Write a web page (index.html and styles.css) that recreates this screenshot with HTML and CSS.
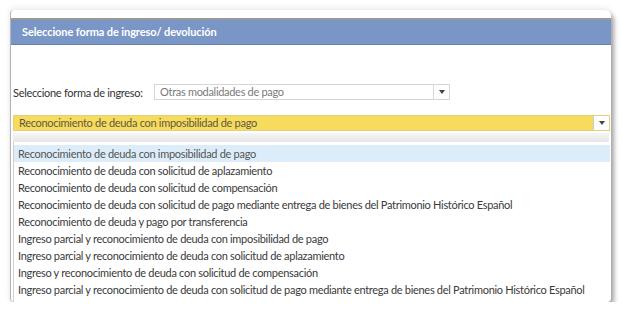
FILE: index.html
```html
<!DOCTYPE html>
<html lang="es">
<head>
    <meta charset="UTF-8">
    <title>Forma de ingreso</title>
    <link rel="stylesheet" href="styles.css">
</head>
<body>
    <div class="window">
        <div class="topband"></div>
        <div class="panel_head">Seleccione forma de ingreso/ devolución</div>
        <div class="panel_body">
            <div class="form_row">
                <span class="form_label">Seleccione forma de ingreso:</span>
                <div class="combo">
                    <span class="combo_text">Otras modalidades de pago</span>
                    <span class="combo_btn"><span class="arrow"></span></span>
                </div>
            </div>
            <div class="combo combo_open">
                <span class="combo_text">Reconocimiento de deuda con imposibilidad de pago</span>
                <span class="combo_btn"><span class="arrow"></span></span>
            </div>
            <div class="list_shade"></div>
            <ul class="list">
                <li class="selected">Reconocimiento de deuda con imposibilidad de pago</li>
                <li>Reconocimiento de deuda con solicitud de aplazamiento</li>
                <li>Reconocimiento de deuda con solicitud de compensación</li>
                <li>Reconocimiento de deuda con solicitud de pago mediante entrega de bienes del Patrimonio Histórico Español</li>
                <li>Reconocimiento de deuda y pago por transferencia</li>
                <li>Ingreso parcial y reconocimiento de deuda con imposibilidad de pago</li>
                <li>Ingreso parcial y reconocimiento de deuda con solicitud de aplazamiento</li>
                <li>Ingreso y reconocimiento de deuda con solicitud de compensación</li>
                <li>Ingreso parcial y reconocimiento de deuda con solicitud de pago mediante entrega de bienes del Patrimonio Histórico Español</li>
            </ul>
        </div>
    </div>
</body>
</html>
```

FILE: styles.css
```css
body {
    margin: 0;
    background: #fff;
    font-family: Lato, "Open Sans", sans-serif;
    font-size: 11px;
    letter-spacing: -0.3px;
}

.window {
    margin: 10px 0 0 10px;
    width: 601px;
    height: 292px;
    background: #fff;
    border-left: 1px solid #b5b5b5;
    border-radius: 4px 6px 4px 4px;
    box-shadow: 3px 4px 5px rgba(0, 0, 0, 0.35), 0 -2px 6px rgba(0, 0, 0, 0.08);
    overflow: hidden;
    box-sizing: border-box;
}

.topband {
    height: 8px;
    border-bottom: 2px solid #9a9a9a;
}

.panel_head {
    height: 24px;
    line-height: 24px;
    padding-left: 11px;
    background: #7a96c7;
    border-bottom: 1px solid #6a7fa8;
    color: #fff;
    font-weight: bold;
    letter-spacing: -0.1px;
}

.panel_body {
    padding: 39px 0 0 2px;
}

.form_row {
    display: flex;
    align-items: center;
}

.form_label {
    width: 141px;
    color: #333;
}

.combo {
    display: flex;
    width: 296px;
    height: 16px;
    border: 1px solid #d6d6d6;
    box-sizing: border-box;
    background: #fff;
}

.combo_text {
    flex: 1;
    padding-left: 5px;
    line-height: 14px;
    color: #7a7a7a;
}

.combo_btn {
    width: 15px;
    border-left: 1px solid #d6d6d6;
    display: flex;
    align-items: center;
    justify-content: center;
}

.arrow {
    width: 0;
    height: 0;
    border-left: 3px solid transparent;
    border-right: 3px solid transparent;
    border-top: 4px solid #444;
}

.combo_open {
    margin-top: 15px;
    width: 597px;
    background: #f6db5c;
    border-color: #e3cf7d;
}

.combo_open .combo_text {
    color: #5f5a45;
}

.combo_open .combo_btn {
    background: #fff;
    border-left-color: #ccc;
}

.list_shade {
    height: 9px;
    margin-top: 2px;
    width: 596px;
    background: linear-gradient(#f6f6f6, #e6e6e6);
}

.list {
    list-style: none;
    margin: 0;
    padding: 3px 0 4px 0;
    width: 597px;
    border-left: 1px solid #cfcfcf;
    box-sizing: border-box;
}

.list li {
    height: 17px;
    line-height: 17px;
    padding-left: 4px;
    color: #3a3a3a;
    white-space: nowrap;
}

.list li.selected {
    background: #dcedf9;
    color: #555;
}
```
